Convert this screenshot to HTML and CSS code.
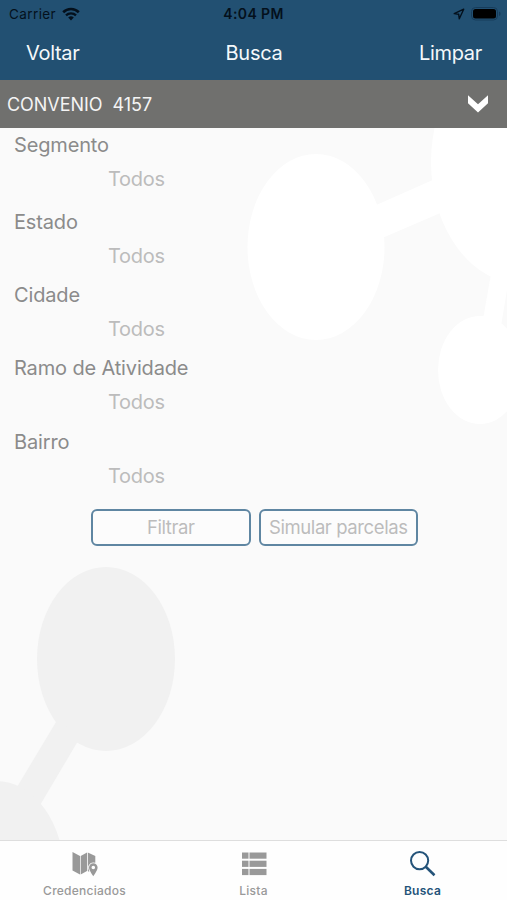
FILE: index.html
```html
<!DOCTYPE html>
<html lang="pt-BR">
<head>
  <meta charset="UTF-8">
  <meta name="viewport" content="width=device-width, initial-scale=1.0">
  <title>Busca</title>
  <link rel="stylesheet" href="styles.css">
</head>
<body>

  <header>
    <div class="status-bar">
      <div class="status-left">
        <span class="carrier">Carrier</span>
        <svg class="wifi" width="18" height="14" viewBox="0 0 18 14">
          <path d="M1.200 5.200a11.200 11.200 0 0 1 15.600 0" fill="none" stroke="#04101c" stroke-width="2.600"/>
          <path d="M4 8.400a7.200 7.200 0 0 1 10 0" fill="none" stroke="#04101c" stroke-width="2.300"/>
          <path d="M9 13.400 6.200 10.600a4 4 0 0 1 5.600 0z" fill="#04101c"/>
        </svg>
      </div>
      <span class="clock">4:04 PM</span>
      <div class="status-right">
        <svg width="12" height="12" viewBox="0 0 12 12">
          <path d="M10.700 1.200 1.200 5.600l4.500.7.6 4.500z" fill="none" stroke="#04101c" stroke-width="1.400" stroke-linejoin="round"/>
        </svg>
        <svg width="30" height="14" viewBox="0 0 30 14">
          <rect x="0.500" y="0.500" width="26" height="12.500" rx="4" fill="none" stroke="#173c5b"/>
          <rect x="2" y="2" width="23" height="9.500" rx="2.500"/>
          <path d="M28 4.500a2.400 2.400 0 0 1 0 4.500z" fill="#173c5b"/>
        </svg>
      </div>
    </div>
    <nav class="nav-bar">
      <a class="nav-left">Voltar</a>
      <h1>Busca</h1>
      <a class="nav-right">Limpar</a>
    </nav>
  </header>

  <div class="convenio">
    <span>CONVENIO&nbsp; 4157</span>
    <svg width="22" height="18" viewBox="0 0 22 18">
      <path d="M1 .3 11 9.300 21 .3v8L11 17.500 1 8.300z" fill="#fff"/>
    </svg>
  </div>

  <main>
    <!-- moléculas do fundo -->
    <svg class="fundo" width="507" height="712" viewBox="0 128 507 712">
      <g fill="#fff">
        <ellipse cx="316" cy="247" rx="68.500" ry="93"/>
        <path d="M374 206 435 179 445 211 380 239z"/>
        <ellipse cx="522" cy="162" rx="91" ry="122"/>
        <path d="M491 274 482 325 500 332 507 290V260z"/>
        <ellipse cx="480" cy="370" rx="42" ry="54"/>
      </g>
      <g fill="#f1f1f1">
        <ellipse cx="106" cy="659" rx="69" ry="92"/>
        <path d="M59 717 14 792 36 812 78 741z"/>
        <ellipse cx="-4" cy="873" rx="68" ry="92"/>
      </g>
    </svg>

    <form class="filtros">
      <div class="campo primeiro">
        <label>Segmento</label>
        <span class="valor">Todos</span>
      </div>
      <div class="campo">
        <label>Estado</label>
        <span class="valor">Todos</span>
      </div>
      <div class="campo">
        <label>Cidade</label>
        <span class="valor">Todos</span>
      </div>
      <div class="campo">
        <label>Ramo de Atividade</label>
        <span class="valor">Todos</span>
      </div>
      <div class="campo">
        <label>Bairro</label>
        <span class="valor">Todos</span>
      </div>
      <div class="botoes">
        <button type="button">Filtrar</button>
        <button type="button">Simular parcelas</button>
      </div>
    </form>
  </main>

  <footer class="tab-bar">
    <a class="tab">
      <svg width="28" height="28" viewBox="0 0 28 28" fill="#999">
        <path d="M1.500 2 9 6v18.500L1.500 20.500z"/>
        <path d="M9.700 6 16 2.500V21L9.700 24.500z"/>
        <path d="M16.800 2.500 24.300 6v6.800a5.200 5.200 0 0 0-7 5.700l1 3.500-1.500-1z"/>
        <path fill-rule="evenodd" d="M22.300 13.200a4.300 4.300 0 0 0-4.300 4.300c0 3 4.300 8.800 4.300 8.800s4.300-5.800 4.300-8.800a4.300 4.300 0 0 0-4.300-4.300zm0 2.500a1.800 1.800 0 1 1 0 3.600 1.800 1.800 0 0 1 0-3.600z"/>
      </svg>
      <span>Credenciados</span>
    </a>
    <a class="tab">
      <svg width="28" height="28" viewBox="0 0 28 28" fill="#999">
        <rect x="2" y="2.500" width="6.500" height="6.200"/>
        <rect x="9.500" y="2.500" width="17" height="6.200"/>
        <rect x="2" y="10.700" width="6.500" height="6.200"/>
        <rect x="9.500" y="10.700" width="17" height="6.200"/>
        <rect x="2" y="18.900" width="6.500" height="6.200"/>
        <rect x="9.500" y="18.900" width="17" height="6.200"/>
      </svg>
      <span>Lista</span>
    </a>
    <a class="tab ativo">
      <svg width="28" height="28" viewBox="0 0 28 28" fill="none" stroke="#245379">
        <circle cx="10.600" cy="10.600" r="8.600" stroke-width="2"/>
        <path d="M16.800 16.800 25.500 25.200" stroke-width="2.600"/>
      </svg>
      <span>Busca</span>
    </a>
  </footer>

</body>
</html>
```
FILE: styles.css
```css
* { box-sizing: border-box; }
body {
  margin: 0;
  height: 900px;
  display: flex;
  flex-direction: column;
  overflow: hidden;
  font-family: Inter, 'Liberation Sans', sans-serif;
  background: #fafafa;
}
header {
  height: 80px;
  background: #225072;
}
.status-bar, .nav-bar {
  display: grid;
  grid-template-columns: 1fr auto 1fr;
  align-items: center;
}
.status-bar {
  height: 27px;
  padding: 0 6px 0 9px;
  font-size: 13.5px;
  color: #04101c;
}
.status-left, .status-right {
  display: flex;
  align-items: center;
  gap: 6px;
}
.status-right { justify-content: flex-end; }
.carrier { letter-spacing: 0.4px; }
.clock {
  font-weight: 600;
  font-size: 14px;
  letter-spacing: 0.4px;
  margin-right: 3px;
}
.nav-bar {
  height: 52px;
  padding: 0 25px 0 26px;
  color: #f4f8fb;
  font-size: 20px;
  letter-spacing: -0.3px;
}
.nav-bar h1 {
  margin: 0;
  font-size: 20px;
  font-weight: 400;
}
.nav-right { text-align: right; }
.convenio {
  height: 48px;
  padding: 0 18px 0 7px;
  display: flex;
  align-items: center;
  justify-content: space-between;
  background: #70706e;
  color: #f4f4f4;
  font-size: 18px;
  letter-spacing: -0.05px;
}
main {
  flex: 1;
  position: relative;
}
.fundo {
  position: absolute;
  top: 0;
  left: 0;
}
.filtros { position: relative; }
.campo {
  height: 73.2px;
  padding-left: 14px;
  display: flex;
  flex-direction: column;
  line-height: 34px;
}
.primeiro { height: 77px; }
.campo label {
  font-size: 20px;
  letter-spacing: -0.15px;
  color: #8b8b8b;
}
.valor {
  padding-left: 94px;
  font-size: 20px;
  letter-spacing: -0.3px;
  color: #bcbcbc;
}
.botoes {
  display: flex;
  gap: 8px;
  padding: 11px 0 0 91px;
}
button {
  width: 159.5px;
  height: 37px;
  padding: 0;
  border: 2px solid #5f86a2;
  border-radius: 6px;
  background: #fcfcfc;
  font-family: inherit;
  font-size: 18.5px;
  letter-spacing: -0.4px;
  color: #bcbcbc;
}
.tab-bar {
  height: 60px;
  display: grid;
  grid-template-columns: repeat(3, 1fr);
  border-top: 1px solid #dedede;
  background: #fefefe;
}
.tab {
  padding-top: 9px;
  display: flex;
  flex-direction: column;
  align-items: center;
  gap: 5px;
  font-size: 12px;
  font-weight: 500;
  line-height: 16px;
  letter-spacing: 0.25px;
  color: #999;
}
.ativo {
  color: #245379;
  font-weight: 600;
}
```
